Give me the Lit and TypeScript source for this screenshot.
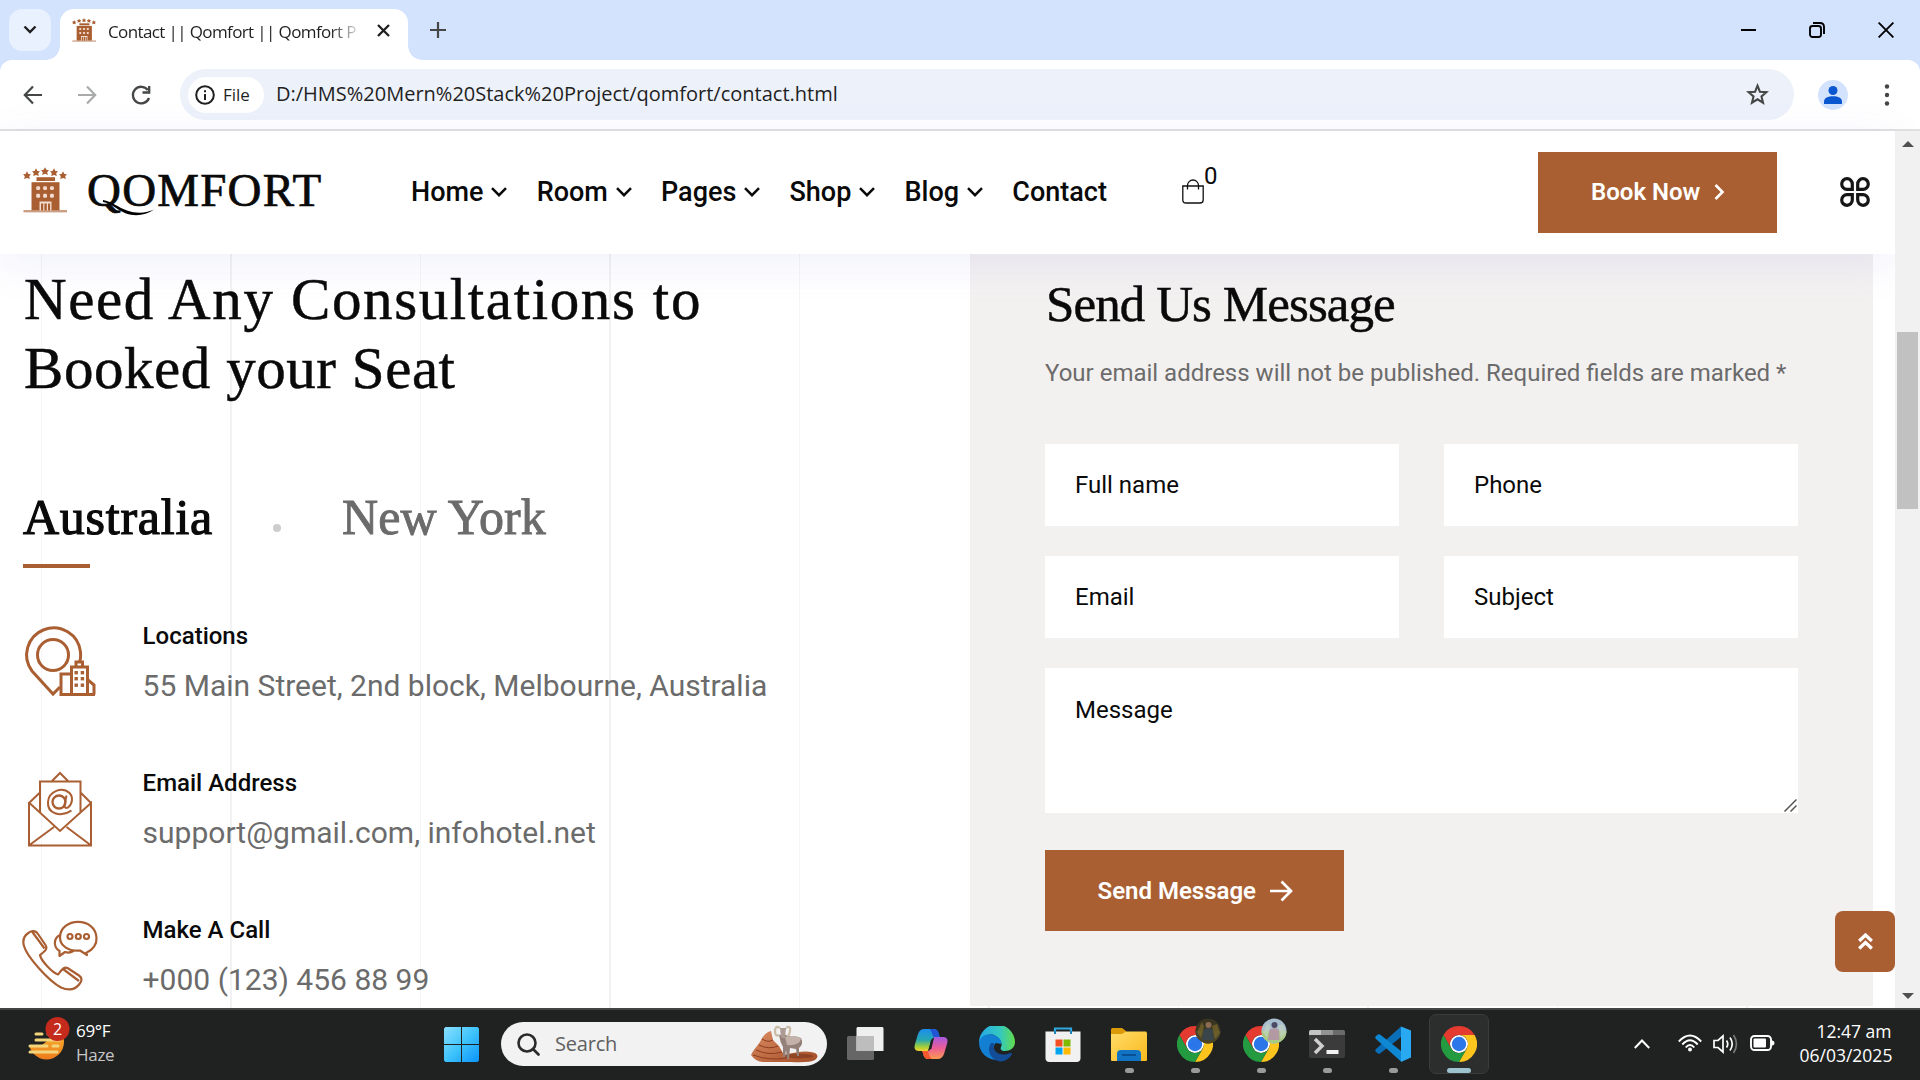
import { LitElement, html, css, svg } from "lit";
import { customElement } from "lit/decorators.js";

const BRAND = "#aa5f33";

const hotelIcon = (w: number, h: number) => html`
  <svg width=${w} height=${h} viewBox="0 0 44 46" fill=${BRAND} preserveAspectRatio="none">
    ${[[4, 8.5], [13, 5.5], [22, 4.4], [31, 5.5], [40, 8.5]].map(
      ([x, y]) => svg`<path transform="translate(${x} ${y})" d="M0-4.2 1.400-1.600 4-1.2 2.200.8 2.800 3.6 0 2.400-2.800 3.6-2.200.8-4-1.2-1.400-1.600Z"/>`
    )}
    <rect x="13.500" y="10.200" width="18.500" height="3.800" />
    <path d="M8.500 15.200H36.500V43.200H8.500Z" />
    <rect x="0.500" y="43" width="43.500" height="2.400" opacity=".6" />
    <g fill="#f1dccf">
      ${[13.2, 20.1, 27].map((x) => [19.2, 26.800].map((y) => svg`<rect x=${x} y=${y} width="3.900" height="3.900" rx="1.300"/>`))}
      <path d="M16.500 34.500H28.500V43.500H16.500Z" />
    </g>
    <path d="M18 36.500H20.200V43.500H18ZM21.400 36.500H23.800V43.500H21.400ZM25 36.500H27.100V43.500H25Z" />
  </svg>`;

@customElement("browser-chrome")
class BrowserChrome extends LitElement {
  static styles = css`
    :host { display: block; height: 131px; box-sizing: border-box; border-bottom: 2px solid #e0e0e0; background: #d3e2fd; font-family: "Open Sans", "Noto Sans", sans-serif; color: #1f1f1f; }
    svg { display: block; flex: none; }
    .strip { display: flex; height: 60px; padding-left: 9px; box-sizing: border-box; }
    .search-tabs { width: 42px; height: 42px; margin: 9px 9px 0 0; border-radius: 13px; background: #e9f0fe; display: grid; place-items: center; }
    .tab { position: relative; width: 348px; height: 51px; margin-top: 9px; background: #fff; border-radius: 14px 14px 0 0; display: flex; align-items: center; padding: 0 18px 9px 12px; box-sizing: border-box; }
    .tab::before, .tab::after { content: ""; position: absolute; bottom: 0; width: 14px; height: 14px; }
    .tab::before { left: -14px; background: radial-gradient(circle at 0 0, transparent 13.500px, #fff 14px); }
    .tab::after { right: -14px; background: radial-gradient(circle at 100% 0, transparent 13.500px, #fff 14px); }
    .title { margin: 3px 0 0 12px; width: 256px; white-space: nowrap; font-size: 17px; letter-spacing: -0.62px; -webkit-mask-image: linear-gradient(90deg, #000 222px, transparent 254px); mask-image: linear-gradient(90deg, #000 222px, transparent 254px); }
    .close { margin-left: auto; }
    .plus { margin: 22px 0 0 22px; }
    .controls { margin-left: auto; display: flex; align-items: center; gap: 53px; padding-right: 26px; }
    .toolbar { height: 69px; background: #fff; border-radius: 12px 12px 0 0; display: flex; align-items: center; padding: 0 30px 0 22px; box-sizing: border-box; }
    .nav { display: flex; gap: 32px; width: 158px; flex: none; }
    .omnibox { width: 1614px; flex: none; height: 51px; box-sizing: border-box; border-radius: 26px; background: #edf1fa; display: flex; align-items: center; padding: 0 25px 0 8px; }
    .chip { width: 76px; height: 36px; border-radius: 18px; background: #fff; display: flex; align-items: center; gap: 8px; padding-left: 7px; box-sizing: border-box; font-size: 17px; font-weight: 500; letter-spacing: 0; }
    .url { margin-left: 12px; margin-top: -2px; font-size: 20px; white-space: nowrap; letter-spacing: 0; }
    .star { margin-left: auto; }
    .avatar { margin: 0 36px 0 24px; }
  `;
  render() {
    return html`
      <div class="strip">
        <div class="search-tabs"><svg width="14" height="10" viewBox="0 0 14 10" fill="none" stroke="#1f1f1f" stroke-width="2.400"><path d="M1.500 1.500 7 7 12.500 1.500" /></svg></div>
        <div class="tab">
          ${hotelIcon(24, 24)}
          <div class="title">Contact || Qomfort || Qomfort P</div>
          <svg class="close" width="13" height="13" viewBox="0 0 13 13" stroke="#1f1f1f" stroke-width="2.300"><path d="M1 1 12 12M12 1 1 12" /></svg>
        </div>
        <svg class="plus" width="16" height="16" viewBox="0 0 16 16" stroke="#444746" stroke-width="2.200"><path d="M8 0V16M0 8H16" /></svg>
        <div class="controls">
          <svg width="15" height="15" viewBox="0 0 15 15"><path d="M0 6H15V8H0Z" /></svg>
          <svg width="16" height="16" viewBox="0 0 16 16" fill="none" stroke="#000" stroke-width="1.900"><rect x="1" y="4" width="11" height="11" rx="2.500" /><path d="M4 1H11Q15 1 15 5V12" /></svg>
          <svg width="16" height="16" viewBox="0 0 16 16" stroke="#000" stroke-width="1.900"><path d="M.600.600 15.400 15.400M15.400.600.600 15.400" /></svg>
        </div>
      </div>
      <div class="toolbar">
        <div class="nav">
          <svg width="22" height="22" viewBox="0 0 22 22" fill="none" stroke="#444746" stroke-width="2.200"><path d="M20 11H3M11 2.500 2.800 11 11 19.500" /></svg>
          <svg width="22" height="22" viewBox="0 0 22 22" fill="none" stroke="#a9abaa" stroke-width="2.200"><path d="M2 11H19M11 2.500 19.200 11 11 19.500" /></svg>
          <svg width="22" height="22" viewBox="0 0 22 22" fill="none" stroke="#444746" stroke-width="2.300"><path d="M19 14A8.300 8.300 0 1 1 17.800 6" /><path d="M19.200 2V8.500H12.500" /></svg>
        </div>
        <div class="omnibox">
          <div class="chip">
            <svg width="20" height="20" viewBox="0 0 20 20"><circle cx="10" cy="10" r="8.800" fill="none" stroke="#1f1f1f" stroke-width="2" /><path d="M9 9H11V15H9ZM9 5.300H11V7.300H9Z" fill="#1f1f1f" /></svg>
            <span>File</span>
          </div>
          <div class="url">D:/HMS%20Mern%20Stack%20Project/qomfort/contact.html</div>
          <svg class="star" width="23" height="23" viewBox="0 0 22 22" fill="none" stroke="#444746" stroke-width="2"><path d="M11 2.600 13.300 8.300 19.500 8.800 14.800 12.800 16.300 18.900 11 15.600 5.700 18.900 7.200 12.800 2.500 8.800 8.700 8.300Z" /></svg>
        </div>
        <svg class="avatar" width="30" height="30" viewBox="0 0 30 30" fill="#0b57d0"><circle cx="15" cy="15" r="15" fill="#d3e3fd" /><circle cx="15" cy="10.500" r="4.500" /><path d="M6 24V21.500C6 18 10 16.200 15 16.200S24 18 24 21.500V24Z" /></svg>
        <svg width="6" height="22" viewBox="0 0 6 22" fill="#444746"><circle cx="3" cy="2.500" r="2.200" /><circle cx="3" cy="11" r="2.200" /><circle cx="3" cy="19.500" r="2.200" /></svg>
      </div>`;
  }
}

@customElement("site-header")
class SiteHeader extends LitElement {
  static styles = css`
    :host { display: flex; align-items: center; position: relative; height: 123px; box-sizing: border-box; padding: 0 25px 0 23px; background: #fff; box-shadow: 0 10px 40px rgba(110, 110, 230, 0.1); font-family: Roboto, sans-serif; color: #0a0a0a; }
    svg { display: block; flex: none; }
    .logo { display: flex; width: 388px; padding-bottom: 5px; gap: 20px; }
    .wordmark { position: relative; font: 47px/46px "Liberation Serif", serif; -webkit-text-stroke: 0.700px; letter-spacing: 1.200px; }
    .swash { position: absolute; left: 16px; top: 33px; }
    nav { display: flex; gap: 29.200px; font-size: 27px; line-height: 36px; font-weight: 500; padding-bottom: 2px; }
    .link { display: flex; align-items: center; gap: 8px; }
    .bag { display: flex; margin-left: 75px; width: 60px; font-size: 24px; line-height: 28px; padding-bottom: 19px; }
    .bag svg { margin-top: 17px; }
    .book { margin-left: auto; width: 239px; height: 81px; background: #aa5f33; color: #fff; display: flex; align-items: center; box-sizing: border-box; padding: 0 0 2px 53px; gap: 14px; font-size: 24px; font-weight: 600; white-space: nowrap; }
    .grid { margin: 0 0 1px 63px; }
  `;
  render() {
    const petal = svg`<path d="M12.300 12.300H7.200A5.300 5.300 0 1 1 12.300 7.200Z"/>`;
    return html`
      <div class="logo">
        ${hotelIcon(44, 46)}
        <div class="wordmark">QOMFORT
          <svg class="swash" width="52" height="16" viewBox="0 0 52 16"><path d="M0 0C8 1 16 8 24 10.500 34 14 44 13 51 9.500 43 15.500 32 16.500 23 13.500 14 10 9 3.500 0 2Z" /></svg>
        </div>
      </div>
      <nav>
        ${["Home", "Room", "Pages", "Shop", "Blog", "Contact"].map(
          (label) => html`<div class="link">
            <span>${label}</span>
            ${label === "Contact" ? "" : html`<svg width="16" height="10" viewBox="0 0 16 10" fill="none" stroke="#0a0a0a" stroke-width="2.500"><path d="M1 1.200 8 8.200 15 1.200" /></svg>`}
          </div>`
        )}
      </nav>
      <div class="bag">
        <svg width="22" height="25" viewBox="0 0 22 25" fill="none" stroke="#111" stroke-width="1.300"><path d="M.800 7H21.200V21Q21.200 24 18 24H4Q.800 24 .800 21Z" /><path d="M5.500 10.500V6.500A5.500 5.500 0 0 1 16.500 6.500V10.500" /></svg>
        <span>0</span>
      </div>
      <div class="book">Book Now<svg width="11" height="16" viewBox="0 0 11 16" fill="none" stroke="#fff" stroke-width="2.600"><path d="M1.500 1 8.500 8 1.500 15" /></svg></div>
      <svg class="grid" width="30" height="30" viewBox="0 0 30 30" fill="none" stroke="#161616" stroke-width="3.200">
        ${petal}<g transform="translate(30 0) scale(-1 1)">${petal}</g><g transform="translate(0 30) scale(1 -1)">${petal}</g><g transform="translate(30 30) scale(-1 -1)">${petal}</g>
      </svg>`;
  }
}

const pinIcon = html`<svg width="80" height="85" viewBox="0 0 80 85" fill="none" stroke="#aa5f33" stroke-width="3">
  <path d="M57.500 41Q59 38 58.500 31A27 27 0 1 0 10 50L31 73 38 66" /><circle cx="31" cy="34" r="15.500" />
  <path d="M39 73.500V53H49M49.500 73.500V46H65.500V73.500M54 45V41H60.500V45M66 59 72 64V73.500M37.500 73.500H73" />
  <g fill="#aa5f33" stroke="none">${[52.500, 58.700].map((x) => [50, 56, 62.500].map((y) => svg`<rect x=${x} y=${y} width="3.400" height="3.400"/>`))}</g>
</svg>`;
const mailIcon = html`<svg width="80" height="85" viewBox="0 0 80 85" fill="none" stroke="#aa5f33" stroke-width="2">
  <path d="M7 35H7.500L38 63 69 35V77.500H7ZM7 35 18 24.500M69 35 59 25M18 44.500V13.500H58.500V44.500M30 13 38 5 46 13M7.500 77 32 59M68.500 77 44.500 59" />
  <circle cx="37" cy="34" r="6.500" stroke-width="2.300" /><path d="M44.500 27.500 42.500 37Q42.500 41 46 39.500C50.500 36 51.500 29 47.500 25 40 18.500 27 23 26 34 25 45 38 50 49.500 42.500" />
</svg>`;
const phoneIcon = html`<svg width="80" height="85" viewBox="0 0 80 85" fill="none" stroke="#aa5f33" stroke-width="2.200" stroke-linejoin="round">
  <path d="M7 17.500C10 15 14 16 16 19L23.500 30C26 34 23 36 18 40 19 46 31 58 36 59.500 39 56 41 51.500 45.500 53L57 60.500C60.500 63 60 66 57.500 69 53 75 47 76 39 72.500 27 66 5 42 2 31 .500 26 1.500 21 7 17.500ZM10 16.500 22.500 33.500M41 54 57 66" />
  <path d="M64 38C71 35 75 29 74.500 23 74 12 65 6.800 56 6.800S38 12.500 38 22.500C38 31 47 36.500 58 35.500L65 40Z" />
  <path d="M38 20C31.500 23 31 32 37.500 36V41L43 37C46 38 50 37 52 35.500" />
  <circle cx="48" cy="21.500" r="2.500" /><circle cx="56.300" cy="21.500" r="2.500" /><circle cx="64.500" cy="21.500" r="2.500" />
</svg>`;

@customElement("contact-section")
class ContactSection extends LitElement {
  static styles = css`
    :host { display: flex; height: 754px; overflow: hidden; font-family: Roboto, sans-serif; color: #0a0a0a; background: repeating-linear-gradient(90deg, #f5f5f5 0 1px, #fff 1px 189px, #f2f2f2 189px 191px, #fff 191px 379px) 41px 0 no-repeat; }
    svg { display: block; flex: none; }
    .info { width: 970px; box-sizing: border-box; padding: 11px 0 0 23px; }
    h1, h2, h3, p { margin: 0; font-weight: 400; }
    h1, h2, .tabs { font-family: "Liberation Serif", serif; -webkit-text-stroke: 0.500px; white-space: nowrap; }
    h1 { font-size: 59px; line-height: 69px; padding-left: 1px; }
    .line-wide { letter-spacing: 1.620px; }
    .line { letter-spacing: 0.550px; }
    .tabs { display: flex; margin-top: 84px; font-size: 50px; line-height: 60px; }
    .tab-active { width: 250px; -webkit-text-stroke: 1.200px; letter-spacing: 0.750px; }
    .dot { width: 8px; height: 8px; border-radius: 50%; background: #ccc; margin: 37px 61px 0 0; }
    .tab-idle { color: #6b6b6b; -webkit-text-stroke: 0.900px; letter-spacing: 0.150px; }
    .rule { width: 67px; height: 4px; background: #aa5f33; margin: 17px 0 53px; }
    .rows { display: grid; row-gap: 62px; margin-left: -1px; }
    .row { display: flex; height: 85px; gap: 40.600px; white-space: nowrap; }
    h3 { font-size: 24px; line-height: 30px; font-weight: 500; }
    .row p { font-size: 30px; line-height: 40px; margin-top: 15px; color: #6b6b6b; }
    .form { width: 903px; height: 752px; box-sizing: border-box; background: #f3f1f0; padding: 20px 75px 0; }
    h2 { font-size: 51px; line-height: 60px; letter-spacing: -0.920px; padding-left: 1px; }
    .note { margin-top: 21px; font-size: 24px; line-height: 36px; color: #6b6b6b; white-space: nowrap; }
    .fields { margin-top: 53px; display: grid; grid-template-columns: 1fr 1fr; gap: 30px 45px; }
    input, textarea { display: block; width: 100%; box-sizing: border-box; border: 0; border-radius: 0; padding: 0 30px; margin: 0; font: 24px/36px Roboto, sans-serif; background: #fff; outline: 0; resize: none; }
    input { height: 82px; }
    textarea { height: 145px; padding-top: 24px; }
    ::placeholder { color: #0a0a0a; opacity: 1; }
    .message { grid-column: span 2; position: relative; }
    .grip { position: absolute; right: 1px; bottom: 1px; }
    .send { margin-top: 37px; width: 299px; height: 81px; background: #aa5f33; color: #fff; display: flex; align-items: center; box-sizing: border-box; padding-left: 52.500px; gap: 13.500px; font-size: 24px; font-weight: 600; white-space: nowrap; }
  `;
  render() {
    const rows = [
      { icon: pinIcon, title: "Locations", text: "55 Main Street, 2nd block, Melbourne, Australia" },
      { icon: mailIcon, title: "Email Address", text: "support@gmail.com, infohotel.net" },
      { icon: phoneIcon, title: "Make A Call", text: "+000 (123) 456 88 99" },
    ];
    return html`
      <div class="info">
        <h1><span class="line-wide">Need Any Consultations to</span><br /><span class="line">Booked your Seat</span></h1>
        <div class="tabs"><div class="tab-active">Australia</div><div class="dot"></div><div class="tab-idle">New York</div></div>
        <div class="rule"></div>
        <div class="rows">
          ${rows.map((r) => html`<div class="row">${r.icon}<div><h3>${r.title}</h3><p>${r.text}</p></div></div>`)}
        </div>
      </div>
      <div class="form">
        <h2>Send Us Message</h2>
        <p class="note">Your email address will not be published. Required fields are marked *</p>
        <div class="fields">
          ${["Full name", "Phone", "Email", "Subject"].map((f) => html`<input placeholder=${f} />`)}
          <div class="message">
            <textarea placeholder="Message"></textarea>
            <svg class="grip" width="13" height="13" viewBox="0 0 13 13" stroke="#555" stroke-width="1.500"><path d="M.500 12.500 12.500.500M6.500 12.500 12.500 6.500" /></svg>
          </div>
        </div>
        <div class="send">Send Message<svg width="23" height="22" viewBox="0 0 23 22" fill="none" stroke="#fff" stroke-width="2.700"><path d="M0 11H21M11.500 1.500 21 11 11.500 20.500" /></svg></div>
      </div>`;
  }
}

const chromeIcon = html`<svg width="36" height="36" viewBox="0 0 48 48">
  <circle cx="24" cy="24" r="12" fill="#fff" />
  <path fill="#e53a30" d="M24 12H44.781A23.994 23.994 0 0 0 3.217 12.003L13.608 30A11.985 11.985 0 0 1 24 12Z" />
  <path fill="#fcc51e" d="M34.391 30.003 24 48A23.994 23.994 0 0 0 44.780 12.003H24A11.985 11.985 0 0 1 34.391 30.003Z" />
  <path fill="#249a41" d="M13.609 30.003 3.218 12.006A23.994 23.994 0 0 0 24.002 48L34.393 30.003A11.985 11.985 0 0 1 13.609 30.003Z" />
  <circle cx="24" cy="24" r="9.600" fill="#2b76e8" />
</svg>`;

@customElement("task-bar")
class TaskBar extends LitElement {
  static styles = css`
    :host { display: flex; height: 72px; box-sizing: border-box; border-top: 2px solid #454545; background: #202222; color: #fff; font-family: "Open Sans", "Noto Sans", sans-serif; font-size: 16.500px; line-height: 24px; }
    svg { display: block; flex: none; }
    .weather { display: flex; width: 430px; padding: 3px 0 0 28px; box-sizing: border-box; gap: 6px; }
    .weather-text { padding-top: 6px; font-size: 17px; letter-spacing: -0.3px; }
    .weather svg text { font-size: 16px; letter-spacing: 0; }
    .muted { color: #c6c6c6; }
    .apps { display: flex; }
    .app { position: relative; width: 66px; height: 70px; display: flex; justify-content: center; padding-top: 16px; box-sizing: border-box; }
    .start { width: 62px; padding-top: 17px; }
    .search { width: 326px; height: 44px; margin: 12px 5px 0 9px; border-radius: 22px; background: #f2f2f2; display: flex; align-items: center; box-sizing: border-box; padding: 0 9px 0 16px; color: #606060; font-size: 20px; letter-spacing: -0.2px; }
    .search span { margin-left: 15px; }
    .scene { margin-left: auto; }
    .dot { position: absolute; left: 29px; top: 58px; width: 9px; height: 5px; border-radius: 3px; background: #9a9a9a; }
    .current::before { content: ""; position: absolute; left: 3px; top: 4px; width: 58px; height: 58px; border: 1px solid #3a3c3c; border-radius: 7px; background: #2c2e2e; }
    .current svg { position: relative; }
    .current .dot { left: 21px; width: 24px; background: #9dc3cf; }
    .face { position: absolute; left: 33px; top: 8px; }
    .tray { display: flex; margin-left: auto; padding: 24px 28.500px 0 0; }
    .chev { margin: 5px 28px 0 0; }
    .speaker, .battery { margin-left: 11px; }
    .clock { margin: -15px 0 0 25px; width: 92px; text-align: right; white-space: nowrap; font-size: 17.500px; letter-spacing: 0; }
  `;
  face(colors: string[]) {
    return html`<svg class="face" width="26" height="26" viewBox="0 0 26 26">
      <defs><clipPath id="face"><circle cx="13" cy="13" r="12.500" /></clipPath></defs>
      <g clip-path="url(#face)"><rect width="26" height="26" fill=${colors[0]} /><rect y="13" width="26" height="13" fill=${colors[1]} />
      <path d="M2 14 7 4 9 9 6 20ZM17 8 22 6 25 15 20 21Z" fill=${colors[4]} opacity=".7" />
      <circle cx="13.500" cy="7" r="3" fill=${colors[2]} /><path d="M7 22 8.500 12Q13 8 18 12L18.500 22Z" fill=${colors[3]} /></g></svg>`;
  }
  render() {
    const dot = html`<span class="dot"></span>`;
    return html`
      <div class="weather">
        <svg width="42" height="52" viewBox="0 0 42 52">
          <defs><linearGradient id="sun" x1="0" y1="0" x2="0" y2="1"><stop stop-color="#f8c536" /><stop offset="1" stop-color="#ee7a1c" /></linearGradient></defs>
          <circle cx="18.500" cy="29" r="17.500" fill="url(#sun)" />
          <path d="M0 8H24V24L14 32H0Z" fill="#202222" />
          <path d="M8 21H14M20 21H26M8 27H32M2 33H19M25 33H30M2 39H29" stroke="#f3d67c" stroke-width="3" stroke-linecap="round" />
          <circle cx="29.500" cy="16" r="12" fill="#c42b1c" /><text x="29.500" y="22" fill="#fff" text-anchor="middle">2</text>
        </svg>
        <div class="weather-text"><div>69°F</div><div class="muted">Haze</div></div>
      </div>
      <div class="apps">
        <div class="app start"><svg width="35" height="35" viewBox="0 0 35 35"><defs><linearGradient id="win" x1="0" y1="0" x2="1" y2="1"><stop stop-color="#8ae0ff" /><stop offset=".5" stop-color="#3fc4fb" /><stop offset="1" stop-color="#0b93fb" /></linearGradient></defs><path fill="url(#win)" d="M1.500 0H17V17H0V1.500ZM18 0H33.500L35 1.500V17H18ZM0 18H17V35H1.500L0 33.500ZM18 18H35V33.500L33.500 35H18Z" /></svg></div>
        <div class="search">
          <svg width="23" height="23" viewBox="0 0 23 23" fill="none" stroke="#2a2a2a" stroke-width="2.600"><circle cx="10" cy="10" r="8.500" /><path d="M16 16 21.500 21.500" stroke-linecap="round" /></svg>
          <span>Search</span>
          <svg class="scene" width="67" height="38" viewBox="0 0 67 38">
            <defs><linearGradient id="rock" x1="0" y1="0" x2="1" y2="1"><stop stop-color="#dc8c63" /><stop offset="1" stop-color="#a24d27" /></linearGradient></defs>
            <path d="M0 30C4 22 8 20 11 13Q15 7 20 6L22 15 28 21 33 30Q55 24 64 28 69 31 64 35 58 38 40 37H12Q5 37 0 30Z" fill="url(#rock)" />
            <path d="M11 14Q17 18 22 15M8 20Q18 25 27 21M5 25Q18 31 31 27M2 30Q18 36 36 33" stroke="#8c3d1f" fill="none" />
            <ellipse cx="47" cy="31" rx="15" ry="2.500" fill="#6d2d16" opacity=".5" />
            <path d="M28 10 33 9 37 11Q46 11 50 13 53 19 48 23V31H46L45 24 39 23 38 34H36L35 25 34 32H32V22Q29 17 28 10Z" fill="#94817a" />
            <path d="M34 12Q46 9 50 14 48 21 36 20Z" fill="#c3b2aa" />
            <path d="M29 3H35L34 13Q32 14 30 12Z" fill="#ad9a92" />
            <path d="M29 3Q24 0 24 6T28 10M35 3Q40 0 39 6T36 10" stroke="#cbbda8" stroke-width="2.300" fill="none" />
          </svg>
        </div>
        <div class="app"><svg width="37" height="36" viewBox="0 0 37 36"><rect y="10" width="27" height="24" rx="1.500" fill="#666" /><path d="M10.500 1H35.500L36.500 2V25H9.500V2Z" fill="#efefef" /><path d="M9.500 10H27V25H9.500Z" fill="#bdbdbd" /></svg></div>
        <div class="app"><svg width="34" height="36" viewBox="0 0 34 36">
          <defs><linearGradient id="cpA" x1="0" y1="0" x2="0" y2="1"><stop stop-color="#1b8df0" /><stop offset=".5" stop-color="#28a8b0" /><stop offset=".8" stop-color="#9fce3b" /><stop offset="1" stop-color="#f5d22d" /></linearGradient><linearGradient id="cpB" x1="0" y1="0" x2="0" y2="1"><stop stop-color="#a55ae0" /><stop offset=".5" stop-color="#ec5d96" /><stop offset="1" stop-color="#fb9a50" /></linearGradient></defs>
          <path d="M10 3H20Q24 3 25 9L26 12H20Q18 12 17 15L14 25H5Q-1 25 1 18L4 8Q6 3 10 3Z" fill="url(#cpA)" />
          <path d="M18 3H20Q24 3 25 9L26 12H20Q18 7 16 3Z" fill="#2155d6" />
          <path d="M24 33H14Q10 33 9 27L8 25H14Q16 24 17 21L20 11H29Q35 11 33 18L30 28Q28 33 24 33Z" fill="url(#cpB)" />
          <path d="M16 33H14Q10 33 9 27L8 25H14Q15 31 18 33Z" fill="#f5582f" />
          <path d="M17 14 20 11.500 17.500 22.500 14.500 25Z" fill="#202222" />
        </svg></div>
        <div class="app"><svg width="36" height="36" viewBox="0 0 36 36">
          <defs><linearGradient id="eT"><stop stop-color="#25a8e8" /><stop offset=".6" stop-color="#35c9bd" /><stop offset="1" stop-color="#62dc4a" /></linearGradient></defs>
          <path d="M0 17A18 18 0 0 1 36 16C36 22 31 25 26 25 22 25 21 23 22 21 24 17 21 12 15 9 8 7 2 12 0 17Z" fill="url(#eT)" />
          <path d="M0 18C1 9 9 7 15 9 20 11 23 14 22 18L17 17C13 19 14 30 24 33A18 18 0 0 1 0 18Z" fill="#127fd2" />
          <path d="M12 17C7 24 12 35 22 35.500 27 35 31 32 33 28 33 27 32 27 31 27 22 31 13 27 15 17Z" fill="#134d98" />
        </svg></div>
        <div class="app"><svg width="36" height="36" viewBox="0 0 36 36"><path d="M10 8V2.500H26V8" fill="none" stroke="#2fa7df" stroke-width="2.200" /><path d="M.500 5.500H35.500V32Q35.500 36 31.500 36H4.500Q.500 36 .500 32Z" fill="#f1f1f1" /><path d="M10 8V5M26 8V5" stroke="#1b84bb" stroke-width="2" /><path fill="#f25022" d="M10.500 13.500h7v7h-7z" /><path fill="#7fba00" d="M18.500 13.500h7v7h-7z" /><path fill="#00a4ef" d="M10.500 21.500h7v7h-7z" /><path fill="#ffb900" d="M18.500 21.500h7v7h-7z" /></svg></div>
        <div class="app"><svg width="36" height="36" viewBox="0 0 36 36"><defs><linearGradient id="fold" x1="0" y1="0" x2="1" y2="1"><stop stop-color="#ffdc6b" /><stop offset="1" stop-color="#fbb91b" /></linearGradient></defs><path d="M0 3.500Q0 2 1.500 2H11L15 5V9H0Z" fill="#dd9a08" /><path d="M0 8H11L15 5.500H35L36 7V34Q36 35 35 35H1Q0 35 0 34Z" fill="url(#fold)" /><path d="M6 35V28Q6 24 10 24H26Q30 24 30 28V35Z" fill="#1173c4" /><path d="M11 29H25" stroke="#0a4f92" stroke-width="2" /></svg>${dot}</div>
        <div class="app">${chromeIcon}${this.face(["#3a3520", "#4a4428", "#8b6c52", "#39454b", "#7a6a2c"])}${dot}</div>
        <div class="app">${chromeIcon}${this.face(["#a9bfd0", "#a8c982", "#4c4a65", "#b39aa2", "#c3d3c0"])}${dot}</div>
        <div class="app"><svg width="36" height="36" viewBox="0 0 36 36"><rect y="4" width="36" height="28" rx="2" fill="#3b3b3b" /><path d="M0 9V6Q0 4 2 4H12V9Z" fill="#c4c4c4" /><path d="M12 4H24V9H12Z" fill="#939393" /><path d="M24 4H34Q36 4 36 6V9H24Z" fill="#6b6b6b" /><path d="M6 13 13 20 6 27" fill="none" stroke="#cfcfcf" stroke-width="3.500" /><rect x="17.500" y="24" width="12" height="4" fill="#f2f2f2" /></svg>${dot}</div>
        <div class="app"><svg width="36" height="36" viewBox="0 0 36 36"><path d="M26 .500 36 4.500V31.500L26 36V0Z" fill="#2aa9f3" /><path d="M26 .500 1 23Q-.500 24.500 1 26L3 27.500Q4 28 5 27.500L26 11Z" fill="#0a6fb8" /><path d="M26 35.500 1 13Q-.500 11.500 1 10L3 8.500Q4 8 5 8.500L26 25Z" fill="#0f88d4" /></svg>${dot}</div>
        <div class="app current">${chromeIcon}${dot}</div>
      </div>
      <div class="tray">
        <svg class="chev" width="16" height="10" viewBox="0 0 16 10" fill="none" stroke="#fff" stroke-width="2"><path d="M.800 9 8 1.500 15.200 9" /></svg>
        <svg width="24" height="18" viewBox="0 0 24 18" fill="none" stroke="#fff" stroke-width="1.900"><path d="M.800 7.500Q12-4.500 23.200 7.500M4.300 10.500Q12 2 19.700 10.500M7.700 13.500Q12 8.500 16.300 13.500" /><circle cx="12" cy="15.500" r="2" fill="#fff" stroke="none" /></svg>
        <svg class="speaker" width="26" height="20" viewBox="0 0 26 20" fill="none" stroke="#fff" stroke-width="1.700"><path d="M1 6.500H5L10 2V18L5 13.500H1ZM13.500 6.500Q16 10 13.500 13.500M17 3.500Q21.500 10 17 16.500" /><path d="M20.500 1Q26.500 10 20.500 19" stroke="#777" /></svg>
        <svg class="battery" width="25" height="18" viewBox="0 0 25 18"><rect x="1" y="2" width="20" height="14" rx="3.500" fill="none" stroke="#fff" stroke-width="1.900" /><rect x="3.500" y="4.500" width="12.500" height="9" rx="1" fill="#fff" /><path d="M21 6.500H22.500Q24.500 7 24.500 9T22.500 11.500H21Z" fill="#fff" /></svg>
        <div class="clock"><div>12:47 am</div><div>06/03/2025</div></div>
      </div>`;
  }
}

@customElement("app-root")
class AppRoot extends LitElement {
  static styles = css`
    :host { display: block; width: 1920px; height: 1080px; overflow: hidden; background: #fff; }
    svg { display: block; }
    .viewport { position: relative; display: flex; height: 877px; }
    .page { width: 1895px; }
    site-header { z-index: 1; }
    .scrollbar { width: 25px; background: #f1f1f1; display: flex; flex-direction: column; align-items: center; box-sizing: border-box; padding: 10px 0 9px; position: relative; z-index: 2; }
    .thumb { width: 21px; height: 177px; background: #c1c1c1; margin: 185px 0 auto; }
    .to-top { position: absolute; z-index: 2; left: 1835px; top: 780px; width: 60px; height: 61px; border-radius: 8px; background: #aa5f33; display: grid; place-items: center; }
  `;
  render() {
    return html`
      <browser-chrome></browser-chrome>
      <div class="viewport">
        <div class="page"><site-header></site-header><contact-section></contact-section></div>
        <div class="scrollbar">
          <svg width="12" height="6" viewBox="0 0 12 6" fill="#505050"><path d="M0 6 6 0 12 6Z" /></svg>
          <div class="thumb"></div>
          <svg width="12" height="6" viewBox="0 0 12 6" fill="#505050"><path d="M0 0 6 6 12 0Z" /></svg>
        </div>
        <div class="to-top"><svg width="15" height="17" viewBox="0 0 15 17" fill="none" stroke="#fff" stroke-width="3.300"><path d="M1.200 8 7.500 2 13.800 8M1.200 15.500 7.500 9.500 13.800 15.500" /></svg></div>
      </div>
      <task-bar></task-bar>`;
  }
}
